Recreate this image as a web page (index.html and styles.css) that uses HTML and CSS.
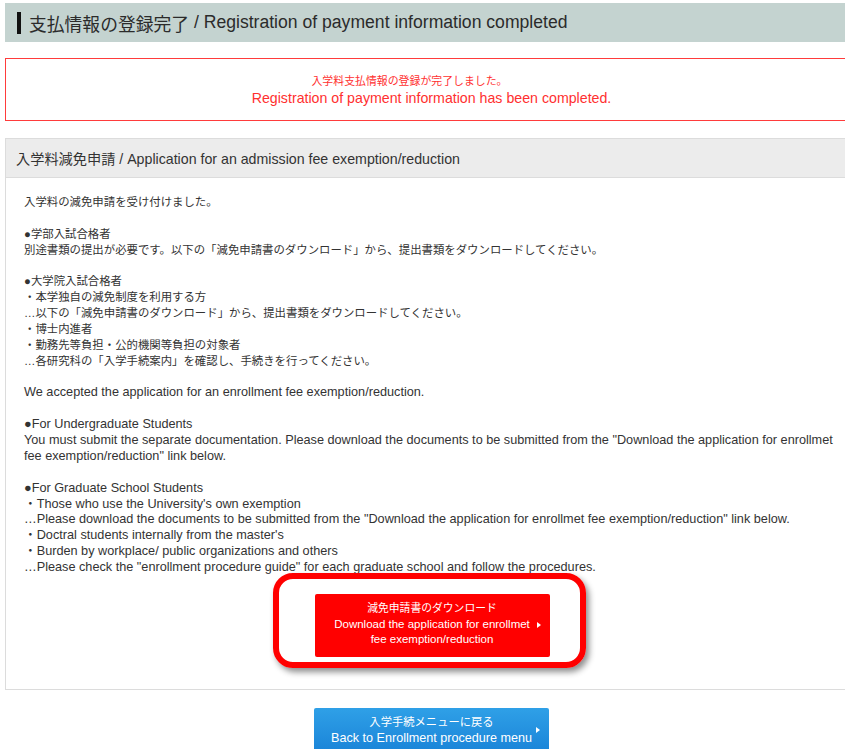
FILE: index.html
```html
<!DOCTYPE html>
<html lang="ja">
<head>
<meta charset="utf-8">
<title>支払情報の登録完了</title>
<link rel="stylesheet" href="styles.css">
</head>
<body>
<div class="page">
  <h1 class="page-title"><span class="ja">支払情報の登録完了</span>&nbsp;/ Registration of payment information completed</h1>

  <div class="notice">
    <p class="ja">入学料支払情報の登録が完了しました。</p>
    <p class="en">Registration of payment information has been completed.</p>
  </div>

  <section class="panel">
    <h2 class="panel-head">入学料減免申請 / Application for an admission fee exemption/reduction</h2>
    <div class="panel-body">
      <p class="ja">入学料の減免申請を受け付けました。</p>
      <p class="ja">●学部入試合格者<br>別途書類の提出が必要です。以下の「減免申請書のダウンロード」から、提出書類をダウンロードしてください。</p>
      <p class="ja">●大学院入試合格者<br>・本学独自の減免制度を利用する方<br>…以下の「減免申請書のダウンロード」から、提出書類をダウンロードしてください。<br>・博士内進者<br>・勤務先等負担・公的機関等負担の対象者<br>…各研究科の「入学手続案内」を確認し、手続きを行ってください。</p>
      <p class="en">We accepted the application for an enrollment fee exemption/reduction.</p>
      <p class="en">●For Undergraduate Students<br>You must submit the separate documentation. Please download the documents to be submitted from the "Download the application for enrollmet fee exemption/reduction" link below.</p>
      <p class="en last">●For Graduate School Students<br>・Those who use the University's own exemption<br>…Please download the documents to be submitted from the "Download the application for enrollmet fee exemption/reduction" link below.<br>・Doctral students internally from the master's<br>・Burden by workplace/ public organizations and others<br>…Please check the "enrollment procedure guide" for each graduate school and follow the procedures.</p>

      <div class="btn-row">
        <div class="btn-wrap">
          <a class="btn btn-red" href="#"><span class="ja">減免申請書のダウンロード</span><span>Download the application for enrollmet</span><span>fee exemption/reduction</span></a>
          <span class="callout"></span>
        </div>
      </div>
    </div>
  </section>

  <div class="btn-row back-row">
    <a class="btn btn-blue" href="#"><span class="ja">入学手続メニューに戻る</span><span class="en">Back to Enrollment procedure menu</span></a>
  </div>
</div>
</body>
</html>
```

FILE: styles.css
```css
html, body {
  margin: 0;
  padding: 0;
  overflow: hidden;
  background: #fff;
}

body {
  font-family: "Liberation Sans", "Noto Sans CJK JP", sans-serif;
  color: #333;
  font-size: 12px;
}

.page {
  width: 853px;
  margin: 3px 0 0 5px;
}

/* page heading with dark left rule */
.page-title {
  margin: 0;
  height: 39px;
  display: flex;
  align-items: center;
  padding-left: 12px;
  background: #c4d3d0;
  font-size: 17.6px;
  font-weight: normal;
  color: #2b2b2b;
}

.page-title .ja {
  font-size: 17.8px;
}

.page-title::before {
  content: "";
  width: 4px;
  height: 22px;
  background: #111;
  margin-right: 8px;
}

/* completion message */
.notice {
  margin-top: 16px;
  height: 63px;
  box-sizing: border-box;
  border: 1px solid #ff3b3b;
  display: flex;
  flex-direction: column;
  justify-content: center;
  align-items: center;
  color: #ff3030;
  line-height: 17px;
}

.notice p {
  margin: 0;
}

.notice .ja {
  font-size: 10.9px;
  margin-right: 44px;
}

.notice .en {
  font-size: 14.2px;
}

/* exemption panel */
.panel {
  margin-top: 17px;
  border: 1px solid #dcdcdc;
}

.panel-head {
  margin: 0;
  height: 38px;
  display: flex;
  align-items: center;
  padding-left: 10px;
  background: #ececec;
  border-bottom: 1px solid #dcdcdc;
  font-size: 14.2px;
  font-weight: normal;
  color: #333;
}

.panel-body {
  padding: 17px 17px 32px 18px;
  line-height: 15.87px;
}

.panel-body p {
  margin: 0 0 15.87px;
}

.panel-body p.ja {
  font-size: 11.4px;
}

.panel-body p.en {
  font-size: 12.7px;
}

.panel-body p.last {
  margin-bottom: 0;
}

/* action buttons */
.btn-row {
  display: flex;
  justify-content: center;
}

.panel-body .btn-row {
  margin-top: 18px;
}

.btn-wrap {
  position: relative;
}

.btn {
  position: relative;
  display: flex;
  flex-direction: column;
  justify-content: center;
  align-items: center;
  width: 235px;
  box-sizing: border-box;
  text-align: center;
  text-decoration: none;
  color: #fff;
  font-size: 11.5px;
  line-height: 15.5px;
  border-radius: 2px;
}

.btn .ja {
  font-size: 10.8px;
}

.btn::after {
  content: "";
  position: absolute;
  right: 9px;
  top: 50%;
  margin-top: -3px;
  border-left: 4px solid #fff;
  border-top: 3px solid transparent;
  border-bottom: 3px solid transparent;
}

.btn-red {
  height: 63px;
  padding-bottom: 2px;
  background: #ff0000;
}

.btn-blue {
  height: 44px;
  padding-top: 2px;
  background: linear-gradient(#2fa0e7, #1a84d8);
}

.btn-blue .ja {
  font-size: 11.3px;
}

.btn-blue .en {
  font-size: 12.6px;
}

.back-row {
  margin-top: 18px;
}

/* emphasis ring drawn around the download button */
.callout {
  position: absolute;
  left: -42px;
  right: -36px;
  top: -21px;
  bottom: -11px;
  border: 6px solid #ff0000;
  border-radius: 20px;
  box-shadow: 3px 4px 6px rgba(0, 0, 0, 0.45);
  pointer-events: none;
}
```
